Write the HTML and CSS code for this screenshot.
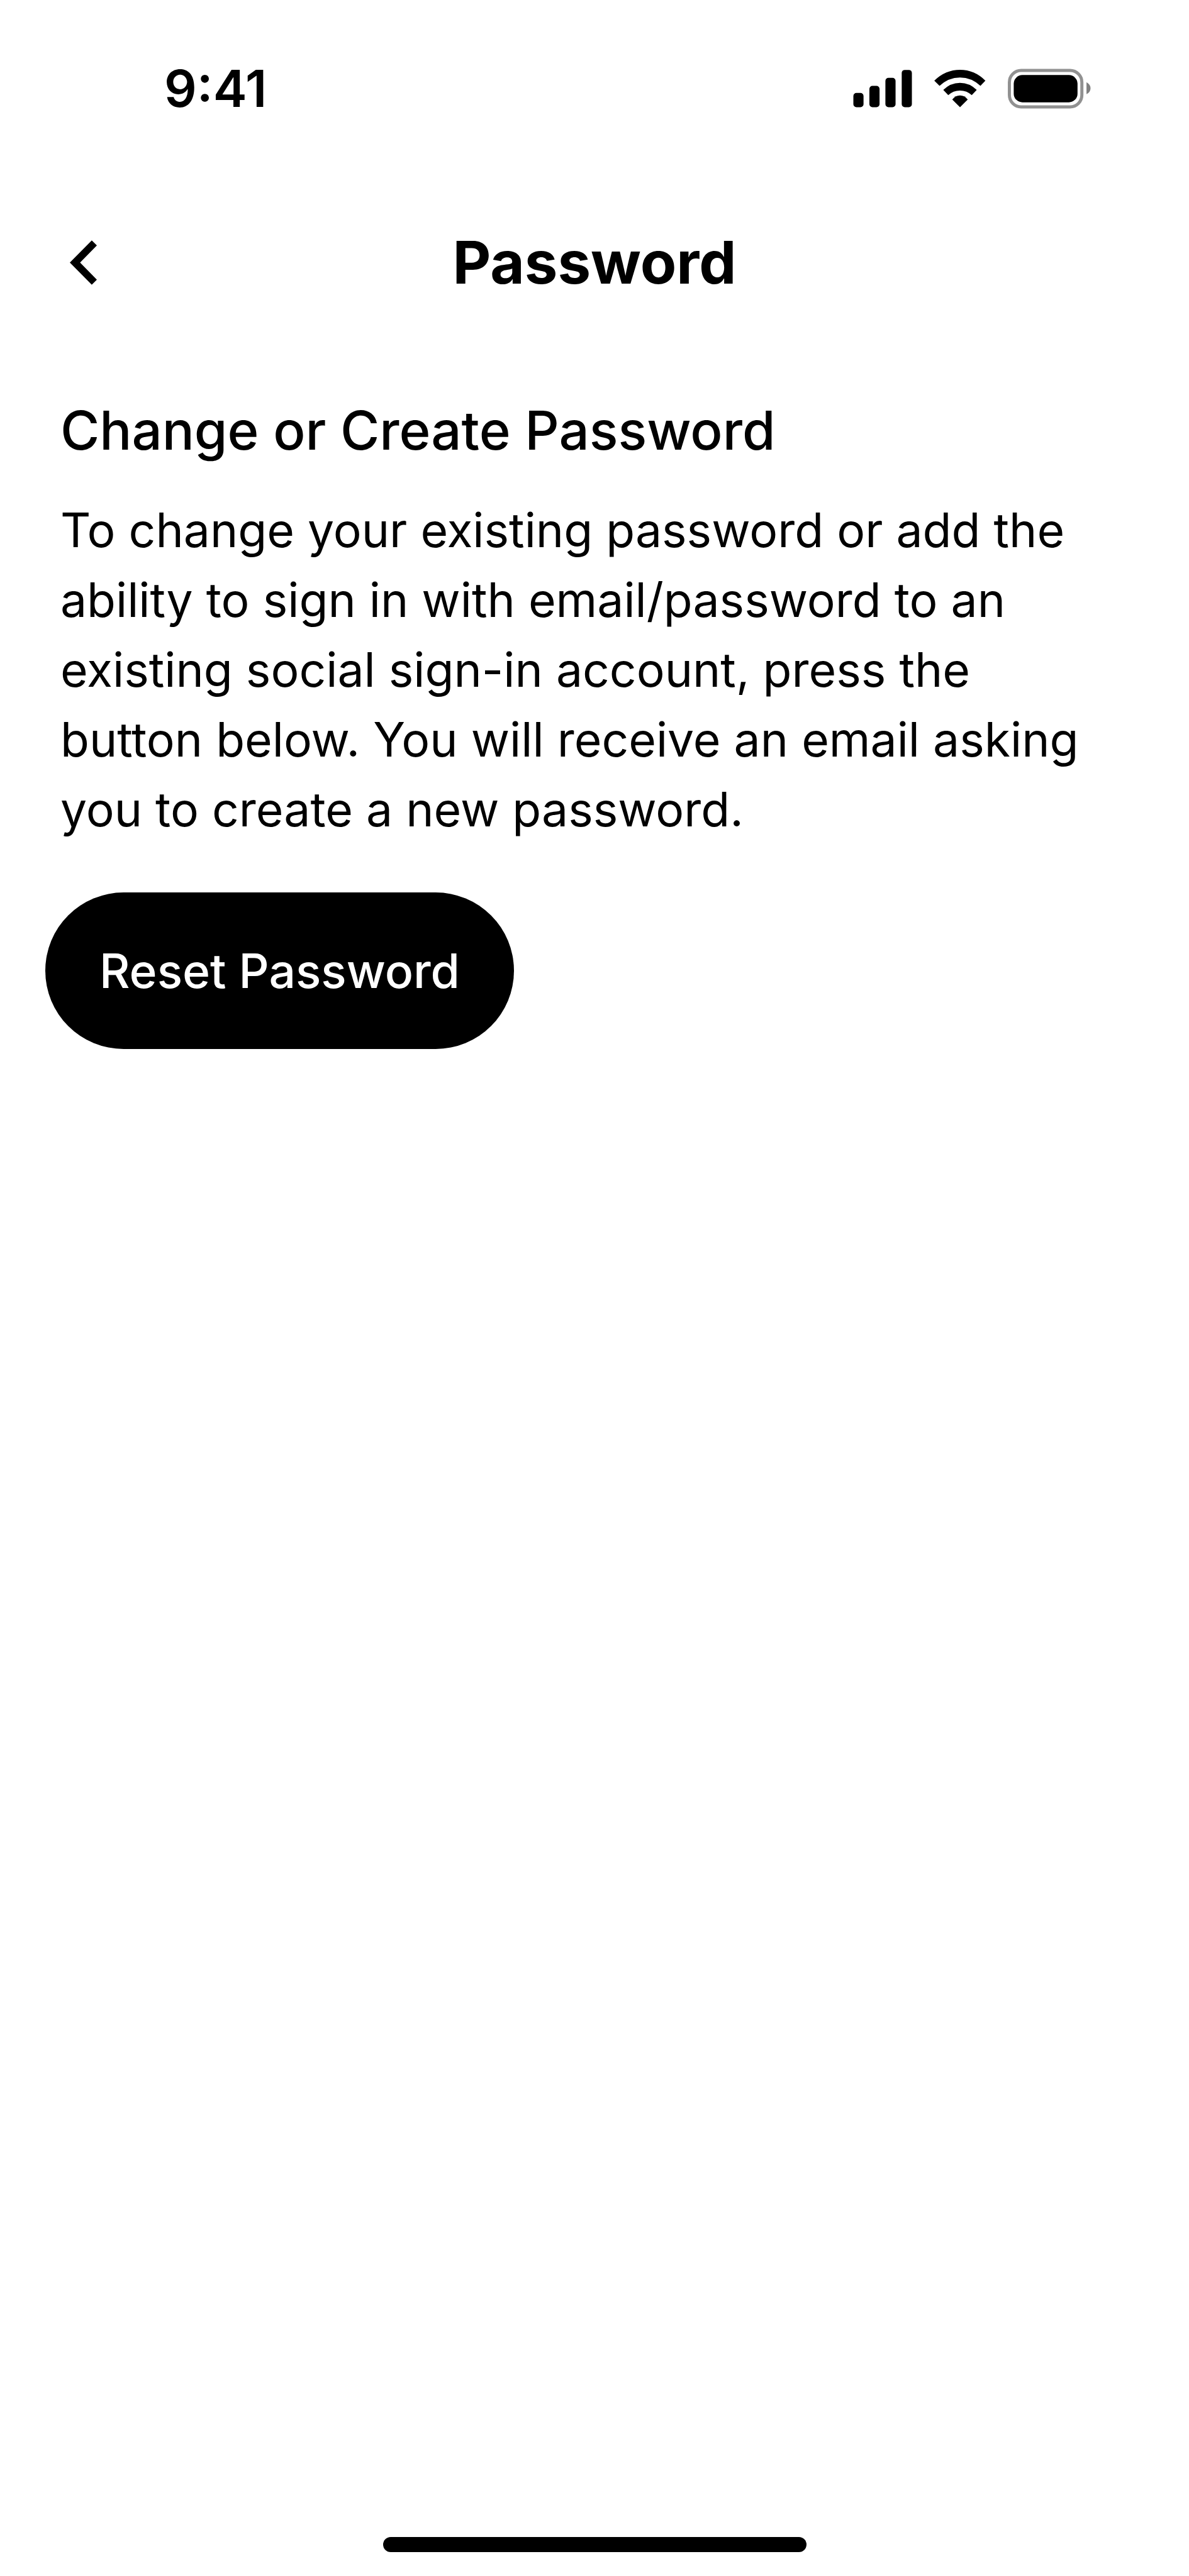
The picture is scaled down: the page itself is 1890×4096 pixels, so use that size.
FILE: index.html
```html
<!DOCTYPE html>
<html lang="en">
<head>
  <meta charset="utf-8">
  <meta name="viewport" content="width=device-width, initial-scale=1">
  <title>Password</title>
  <link rel="stylesheet" href="styles.css">
</head>
<body class="screen">
  <div class="status-bar">
    <time class="status-time">9:41</time>
    <div class="status-icons">
      <svg class="icon-signal" viewBox="0 0 96 65" aria-hidden="true">
        <rect x="0.5" y="39.5" width="16.5" height="23" rx="5"/>
        <rect x="26.5" y="28" width="16.5" height="34.500" rx="5"/>
        <rect x="52.5" y="15" width="16.5" height="47.500" rx="5"/>
        <rect x="79" y="2" width="16.5" height="60.500" rx="5"/>
      </svg>
      <svg class="icon-wifi" viewBox="0 0 84 65" aria-hidden="true">
        <path d="M1 19.500 Q19 2 42.500 2 Q66 2 83.500 19.500 L75.500 28 Q61 14.500 42.500 14.500 Q24 14.500 9.500 28 Z"/>
        <path d="M15.500 34.500 Q27 23 42.500 23 Q58 23 69.500 34.500 L61.500 43 Q53.500 35.500 42.500 35.500 Q31.500 35.500 23.500 43 Z"/>
        <path d="M30 50 Q35 43.500 42.500 43.500 Q50 43.500 55 50 L42.500 62.500 Z"/>
      </svg>
      <svg class="icon-battery" viewBox="0 0 136 65" aria-hidden="true">
        <rect class="battery-case" x="3.500" y="3" width="117" height="59" rx="19"/>
        <rect x="10.500" y="10.500" width="103" height="44" rx="14"/>
        <path class="battery-tip" d="M128 22 Q134.500 25.500 134.500 32 Q134.500 38 128 41.500 Z"/>
      </svg>
    </div>
  </div>

  <header class="nav-bar">
    <button class="back-button" type="button" aria-label="Back">
      <svg class="icon-back" viewBox="0 0 44 72" aria-hidden="true">
        <path d="M0 36 L35.700 0 L44 8 L16.700 36 L44 64 L35.700 72 Z"/>
      </svg>
    </button>
    <h1 class="nav-title">Password</h1>
  </header>

  <main class="content">
    <h2 class="section-title">Change or Create Password</h2>
    <p class="section-text">To change your existing password or add the ability to sign in with email/password to an existing social sign-in account, press the button below. You will receive an email asking you to create a new password.</p>
    <button class="reset-button" type="button">Reset Password</button>
  </main>

  <div class="home-indicator"></div>
</body>
</html>
```
FILE: styles.css
```css
* {
  box-sizing: border-box;
}

.screen {
  display: flex;
  flex-direction: column;
  min-height: 100vh;
  margin: 0;
  background: #fff;
  color: #000;
  font-family: Inter, "Liberation Sans", sans-serif;
}

.status-bar {
  display: flex;
  align-items: center;
  justify-content: space-between;
  padding: 92px 155px 0 261px;
}

.status-time {
  font-size: 81px;
  font-weight: 600;
  line-height: 98px;
}

.status-icons {
  display: flex;
  gap: 34px;
}

.icon-signal,
.icon-wifi,
.icon-battery {
  height: 64px;
}

.icon-signal {
  width: 94px;
}

.icon-wifi {
  width: 83px;
}

.icon-battery {
  width: 134px;
}

.battery-case {
  fill: none;
  stroke: #919191;
  stroke-width: 5;
}

.battery-tip {
  fill: #808080;
}

.nav-bar {
  display: grid;
  grid-template-columns: 120px 1fr 120px;
  align-items: center;
  padding: 163px 72px 0;
}

.back-button {
  display: grid;
  place-items: center;
  height: 120px;
  padding: 0;
  border: 0;
  background: none;
}

.icon-back {
  width: 43px;
  height: 71px;
}

.nav-title {
  margin: 0;
  font-size: 94px;
  font-weight: 700;
  line-height: 128px;
  text-align: center;
}

.content {
  padding: 148px 72px 0;
}

.section-title {
  margin: 0 24px 46px;
  font-size: 85px;
  font-weight: 500;
  line-height: 112px;
}

.section-text {
  margin: 0 72px 77px 24px;
  font-size: 75px;
  font-weight: 400;
  line-height: 111px;
}

.reset-button {
  height: 249px;
  padding: 0 86px;
  border: 0;
  border-radius: 125px;
  background: #000;
  color: #fff;
  font-family: inherit;
  font-size: 75px;
  font-weight: 500;
}

.home-indicator {
  width: 673px;
  height: 24px;
  margin: auto auto 38px;
  border-radius: 12px;
  background: #000;
}
```
